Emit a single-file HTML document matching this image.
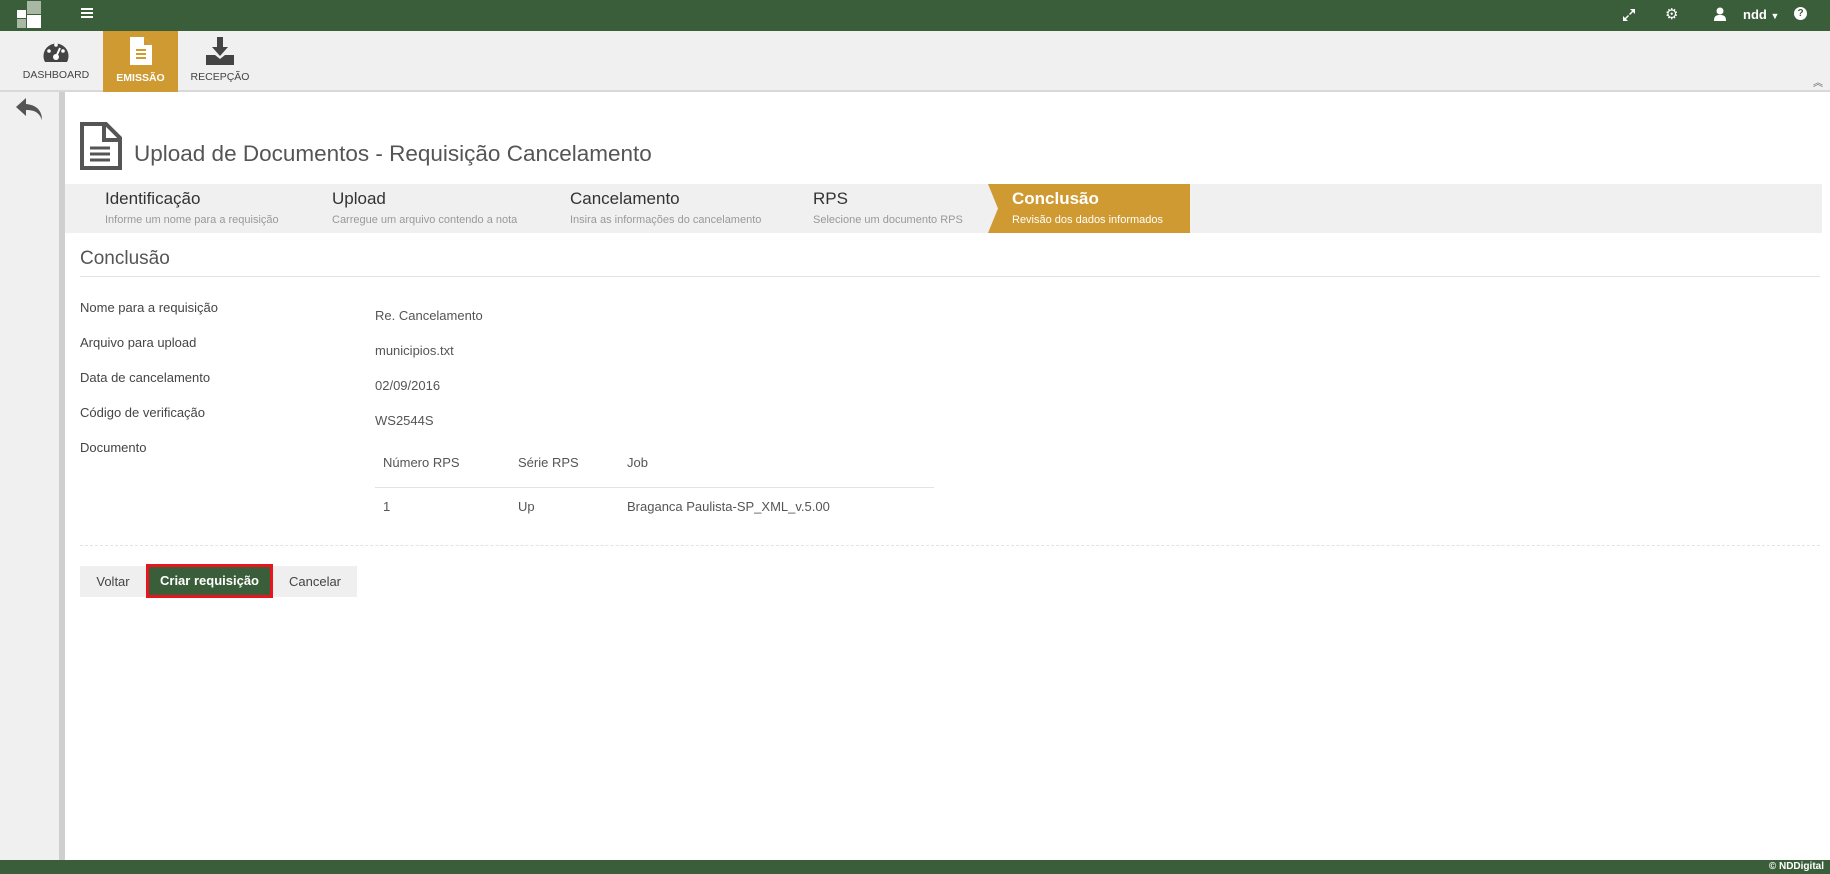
<!DOCTYPE html>
<html><head><meta charset="utf-8"><style>
*{margin:0;padding:0;box-sizing:border-box}
body{width:1830px;height:874px;position:relative;overflow:hidden;background:#fff;font-family:"Liberation Sans",sans-serif;color:#555}
.a{position:absolute}
.top{left:0;top:0;width:1830px;height:31px;background:#3a5e3a}
.tb{left:0;top:31px;width:1830px;height:61px;background:#f0f0f0;border-bottom:2px solid #d8d8d8}
.tab{top:31px;height:61px;text-align:center;font-size:11px;color:#444}
.side{left:0;top:92px;width:59px;height:768px;background:#f0f0f0}
.sb{left:59px;top:92px;width:6px;height:768px;background:#cfcfcf}
.foot{left:0;top:860px;width:1830px;height:14px;background:#3a5e3a;color:#fff;font-size:10px;text-align:right;padding-right:6px;line-height:14px;font-weight:bold}
.steps{left:65px;top:184px;width:1757px;height:49px;background:#f0f0f0}
.st{top:189px;font-size:17px;color:#333}
.st small{display:block;font-size:11px;color:#999;margin-top:5px}
.lbl{left:80px;font-size:13px;color:#444}
.val{left:375px;font-size:13px;color:#555}
.btn{top:566px;height:31px;background:#efefef;font-size:13px;color:#444;line-height:31px;text-align:center}
</style></head><body>
<div class="a top"></div>
<svg class="a" style="left:17px;top:1px" width="28" height="28"><rect x="0" y="9" width="9" height="8" fill="#fff"/><rect x="0" y="18" width="9" height="9" fill="#a8b8a4"/><rect x="10" y="0" width="14" height="13" fill="#a8b8a4"/><rect x="10" y="14" width="14" height="13" fill="#fff"/></svg>
<div class="a" style="left:81px;top:8px;width:12px;height:2px;background:#fff;box-shadow:0 4px 0 #fff,0 8px 0 #fff"></div>
<svg class="a" style="left:1622px;top:8px" width="14" height="14" fill="#fff"><path d="M8 1h5v5l-2-2-3 3-1-1 3-3zM6 13H1V8l2 2 3-3 1 1-3 3z"/></svg>
<div class="a" style="left:1665px;top:5px;color:#fff;font-size:15px">⚙</div>
<svg class="a" style="left:1714px;top:7px" width="12" height="14" fill="#fff"><circle cx="6" cy="4" r="3.5"/><path d="M0 14c0-5 2-6 6-6s6 1 6 6z"/></svg>
<div class="a" style="left:1743px;top:7px;color:#fff;font-size:13px;font-weight:bold">ndd <span style="font-size:9px">▼</span></div>
<div class="a" style="left:1794px;top:7px;width:13px;height:13px;border-radius:50%;background:#fff;color:#3a5e3a;font-size:10px;font-weight:bold;text-align:center;line-height:13px">?</div>
<div class="a tb"></div>
<div class="a tab" style="left:20px;width:72px"><svg style="margin-top:8px" width="28" height="24"><path d="M3 23A12.5 12.5 0 1 1 25 23Z" fill="#444"/><circle cx="14" cy="18" r="3" fill="#fff"/><path d="M14 18l4-9" stroke="#fff" stroke-width="2"/><circle cx="7" cy="12" r="1.8" fill="#fff"/><circle cx="21" cy="12" r="1.8" fill="#fff"/><circle cx="14" cy="6" r="1.8" fill="#fff"/></svg><div style="margin-top:3px;font-size:10.5px">DASHBOARD</div></div>
<div class="a tab" style="left:103px;width:75px;background:#cf9a32;color:#fff;font-weight:bold"><svg style="margin-top:6px" width="22" height="28"><path d="M0 0h14l8 8v20H0z" fill="#fff"/><path d="M14 0v8h8" fill="#cf9a32"/><path d="M6 13h10M6 17h10M6 21h10" stroke="#cf9a32" stroke-width="2"/></svg><div style="margin-top:4px;font-size:10.5px">EMISSÃO</div></div>
<div class="a tab" style="left:186px;width:68px"><svg style="margin-top:6px" width="28" height="28" fill="#444"><path d="M11 0h6v10h5l-8 9-8-9h5z"/><path d="M0 18h9l5 4 5-4h9v10H0z"/></svg><div style="margin-top:3px;font-size:10.5px">RECEPÇÃO</div></div>
<div class="a" style="left:1813px;top:74px;font-size:10px;color:#666">︽</div>
<div class="a side"></div><div class="a sb"></div>
<svg class="a" style="left:14px;top:96px" width="32" height="30"><path d="M12 2L2 11l10 9v-6c8 0 13 2 16 10 0-9-5-15-16-16z" fill="#555"/></svg>
<svg class="a" style="left:80px;top:122px" width="42" height="48"><path d="M2 2h24l14 14v30H2z" fill="none" stroke="#555" stroke-width="4"/><path d="M24 2v16h16" fill="none" stroke="#555" stroke-width="4"/><path d="M10 26h20M10 32h20M10 38h20" stroke="#555" stroke-width="3"/></svg>
<div class="a" style="left:134px;top:141px;font-size:22.5px;color:#555">Upload de Documentos - Requisição Cancelamento</div>
<div class="a steps"></div>
<svg class="a" style="left:988px;top:184px" width="202" height="49"><path d="M0 0H202V49H0L10 24.5z" fill="#cf9a32"/></svg>
<div class="a st" style="left:105px">Identificação<small>Informe um nome para a requisição</small></div>
<div class="a st" style="left:332px">Upload<small>Carregue um arquivo contendo a nota</small></div>
<div class="a st" style="left:570px">Cancelamento<small>Insira as informações do cancelamento</small></div>
<div class="a st" style="left:813px">RPS<small>Selecione um documento RPS</small></div>
<div class="a st" style="left:1012px;color:#fff;font-weight:bold">Conclusão<small style="color:#fff;font-weight:normal">Revisão dos dados informados</small></div>
<div class="a" style="left:80px;top:248px;font-size:19px;color:#555">Conclusão</div>
<div class="a" style="left:80px;top:276px;width:1740px;height:1px;background:#e3e3e3"></div>
<div class="a lbl" style="top:300px">Nome para a requisição</div><div class="a val" style="top:308px">Re. Cancelamento</div>
<div class="a lbl" style="top:335px">Arquivo para upload</div><div class="a val" style="top:343px">municipios.txt</div>
<div class="a lbl" style="top:370px">Data de cancelamento</div><div class="a val" style="top:378px">02/09/2016</div>
<div class="a lbl" style="top:405px">Código de verificação</div><div class="a val" style="top:413px">WS2544S</div>
<div class="a lbl" style="top:440px">Documento</div>
<div class="a val" style="left:383px;top:455px">Número RPS</div><div class="a val" style="left:518px;top:455px">Série RPS</div><div class="a val" style="left:627px;top:455px">Job</div>
<div class="a" style="left:375px;top:487px;width:559px;height:1px;background:#e3e3e3"></div>
<div class="a val" style="left:383px;top:499px">1</div><div class="a val" style="left:518px;top:499px">Up</div><div class="a val" style="left:627px;top:499px">Braganca Paulista-SP_XML_v.5.00</div>
<div class="a" style="left:80px;top:545px;width:1740px;border-top:1px dashed #e3e3e3"></div>
<div class="a btn" style="left:80px;width:66px">Voltar</div>
<div class="a btn" style="left:146px;top:564px;width:127px;height:34px;background:#3a5e3a;border:3px solid #e8141e;color:#fff;font-weight:bold;line-height:28px">Criar requisição</div>
<div class="a btn" style="left:273px;width:84px">Cancelar</div>
<div class="a foot">© NDDigital</div>
</body></html>
